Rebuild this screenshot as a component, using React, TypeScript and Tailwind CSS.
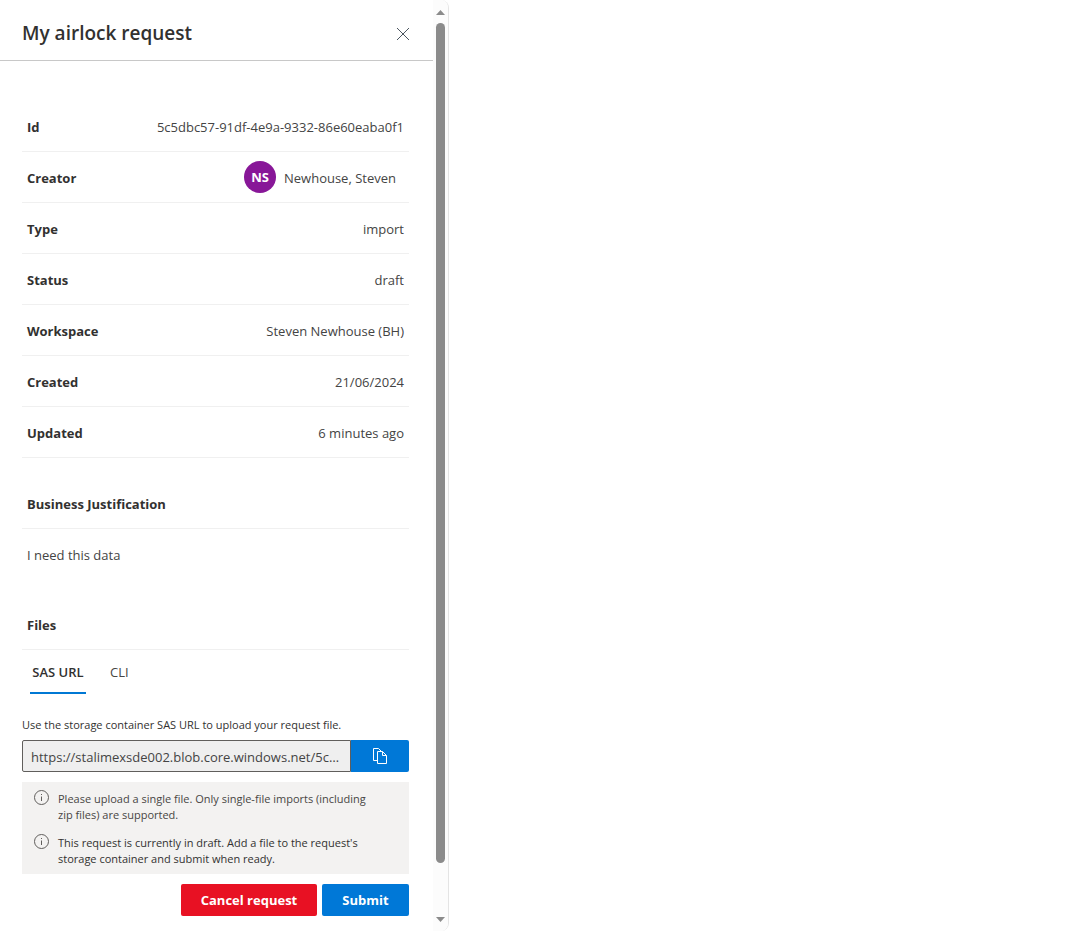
import type { ReactNode } from "react";

const details: { label: string; value: string }[] = [
  { label: "Type", value: "import" },
  { label: "Status", value: "draft" },
  { label: "Workspace", value: "Steven Newhouse (BH)" },
  { label: "Created", value: "21/06/2024" },
  { label: "Updated", value: "6 minutes ago" },
];

function DetailRow({ label, children }: { label: string; children: ReactNode }) {
  return (
    <div className="flex h-[51px] items-center justify-between border-b border-[#f0f0f0] px-[5px]">
      <dt className="pt-0.5 font-bold">{label}</dt>
      <dd className="text-[#444]">{children}</dd>
    </div>
  );
}

function SectionTitle({ children }: { children: ReactNode }) {
  return (
    <h2 className="flex h-[51px] items-center border-b border-[#f0f0f0] px-[5px] pt-0.5 font-bold">
      {children}
    </h2>
  );
}

function Notice({ children, dark }: { children: ReactNode; dark?: boolean }) {
  return (
    <div className="flex gap-2">
      <svg className="size-4 shrink-0" viewBox="0 0 16 16" fill="none" aria-hidden="true">
        <circle cx="7.500" cy="7.500" r="7" stroke="#605e5c" />
        <path d="M7.500 6.500v4.500" stroke="#605e5c" />
        <path d="M7.500 4v1" stroke="#605e5c" />
      </svg>
      <p className={dark ? "pt-px text-[#323130]" : "pt-px text-[#484644]"}>{children}</p>
    </div>
  );
}

function ScrollRail() {
  return (
    <div className="flex w-[15px] shrink-0 flex-col items-center bg-[#fcfcfc] pt-[10px] pb-[9px]" aria-hidden="true">
      <svg className="h-[5px] w-[9px]" viewBox="0 0 9 5">
        <path d="M4.5 0 9 5H0z" fill="#8b8b8b" />
      </svg>
      <div className="mt-2 mb-[54px] w-[9px] flex-1 rounded-full bg-[#8b8b8b]" />
      <svg className="h-[5px] w-[9px]" viewBox="0 0 9 5">
        <path d="M0 0h9L4.5 5z" fill="#8b8b8b" />
      </svg>
    </div>
  );
}

export default function App() {
  return (
    <main className="flex w-full max-w-[449px] overflow-hidden rounded-r-lg border-r border-[#e4e4e4] bg-white font-['Open_Sans','Noto_Sans',sans-serif] text-[13px] leading-5 text-[#323130]">
      <div className="min-w-0 flex-1">
        <header className="flex h-[61px] items-center justify-between border-b border-[#c8c8c8] pr-[22px] pl-[22px]">
          <h1 className="pt-1.5 text-[19px] leading-7 font-semibold">My airlock request</h1>
          <button type="button" aria-label="Close" className="flex h-8 w-4 items-center justify-center pt-2">
            <svg className="size-4" viewBox="0 0 16 16" aria-hidden="true">
              <path d="M2 2l12 12M14 2L2 14" fill="none" stroke="#4b5560" />
            </svg>
          </button>
        </header>

        <div className="pt-10 pr-6 pb-[15px] pl-[22px]">
          <dl>
            <DetailRow label="Id">
              <span className="block pt-0.5">5c5dbc57-91df-4e9a-9332-86e60eaba0f1</span>
            </DetailRow>
            <DetailRow label="Creator">
              <span className="flex items-center gap-2 pr-2">
                <span className="flex size-8 items-center justify-center rounded-full bg-[#881798] font-bold text-white">
                  NS
                </span>
                <span className="pt-0.5">Newhouse, Steven</span>
              </span>
            </DetailRow>
            {details.map((d) => (
              <DetailRow key={d.label} label={d.label}>
                <span className="block pt-0.5">{d.value}</span>
              </DetailRow>
            ))}
          </dl>

          <section className="pt-5">
            <SectionTitle>Business Justification</SectionTitle>
            <p className="flex h-[50px] items-center px-[5px] pt-0.5 text-[#444]">I need this data</p>
          </section>

          <section className="pt-5">
            <SectionTitle>Files</SectionTitle>
            <div role="tablist" className="flex gap-4 px-2 leading-[44px]">
              <button
                type="button"
                role="tab"
                aria-selected="true"
                className="h-[44px] w-14 border-b-2 border-[#0078d4] font-semibold whitespace-nowrap"
              >
                SAS URL
              </button>
              <button type="button" role="tab" aria-selected="false" className="h-[44px] px-2 text-[#484644]">
                CLI
              </button>
            </div>

            <div role="tabpanel" className="pt-[23px]">
              <label htmlFor="sas-url" className="block text-[11px] leading-4">
                Use the storage container SAS URL to upload your request file.
              </label>
              <div className="mt-[7px] flex h-8">
                <input
                  id="sas-url"
                  type="text"
                  readOnly
                  value="https://stalimexsde002.blob.core.windows.net/5c5dbc57-91df-4e9a-9332-86e60eaba0f1"
                  className="min-w-0 flex-1 truncate rounded-l-xs border border-[#605e5c] bg-[#efefef] px-2 pt-0.5 text-[#444]"
                />
                <button
                  type="button"
                  aria-label="Copy to clipboard"
                  className="flex w-[58px] items-center justify-center rounded-r-xs bg-[#0078d7]"
                >
                  <svg className="size-4" viewBox="0 0 16 16" fill="none" stroke="#fff" aria-hidden="true">
                    <path d="M5.500 12.500h-4V.5h5l3 3" />
                    <path d="M5.500 3.500h5l4 4v8h-9z" />
                    <path d="M10.500 3.500v4h4" />
                  </svg>
                </button>
              </div>
            </div>
          </section>

          <div className="mt-[10px] flex flex-col gap-[11px] bg-[#f3f2f1] pt-2 pr-8 pb-[7px] pl-3 text-[11px] leading-4">
            <Notice>
              Please upload a single file. Only single-file imports (including zip files) are supported.
            </Notice>
            <Notice dark>
              This request is currently in draft. Add a file to the request's storage container and submit when ready.
            </Notice>
          </div>

          <div className="mt-[10px] flex justify-end gap-[5px] font-bold text-white">
            <button type="button" className="h-8 w-[136px] rounded-xs bg-[#e81123]">
              Cancel request
            </button>
            <button type="button" className="h-8 w-[87px] rounded-xs bg-[#0078d7]">
              Submit
            </button>
          </div>
        </div>
      </div>
      <ScrollRail />
    </main>
  );
}
